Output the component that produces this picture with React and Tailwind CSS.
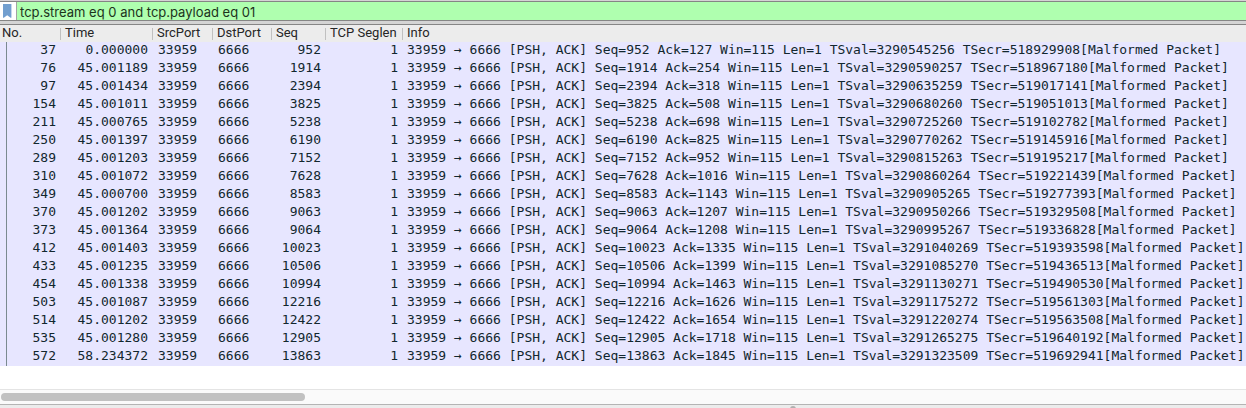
import { useState } from "react";

const packets = [
  [37, "0.000000", 952, 127, 3290545256, 518929908],
  [76, "45.001189", 1914, 254, 3290590257, 518967180],
  [97, "45.001434", 2394, 318, 3290635259, 519017141],
  [154, "45.001011", 3825, 508, 3290680260, 519051013],
  [211, "45.000765", 5238, 698, 3290725260, 519102782],
  [250, "45.001397", 6190, 825, 3290770262, 519145916],
  [289, "45.001203", 7152, 952, 3290815263, 519195217],
  [310, "45.001072", 7628, 1016, 3290860264, 519221439],
  [349, "45.000700", 8583, 1143, 3290905265, 519277393],
  [370, "45.001202", 9063, 1207, 3290950266, 519329508],
  [373, "45.001364", 9064, 1208, 3290995267, 519336828],
  [412, "45.001403", 10023, 1335, 3291040269, 519393598],
  [433, "45.001235", 10506, 1399, 3291085270, 519436513],
  [454, "45.001338", 10994, 1463, 3291130271, 519490530],
  [503, "45.001087", 12216, 1626, 3291175272, 519561303],
  [514, "45.001202", 12422, 1654, 3291220274, 519563508],
  [535, "45.001280", 12905, 1718, 3291265275, 519640192],
  [572, "58.234372", 13863, 1845, 3291323509, 519692941],
];

const columns = [
  { label: "No.", width: "w-[61px]", pad: "pl-0.5" },
  { label: "Time", width: "w-[92px]", pad: "pl-1" },
  { label: "SrcPort", width: "w-[60px]", pad: "pl-1" },
  { label: "DstPort", width: "w-[59px]", pad: "pl-1" },
  { label: "Seq", width: "w-[54px]", pad: "pl-1" },
  { label: "TCP Seglen", width: "w-[77px]", pad: "pl-1" },
  { label: "Info", width: "", pad: "pl-1" },
];

function FilterBar() {
  const [filter, setFilter] = useState("tcp.stream eq 0 and tcp.payload eq 01");
  return (
    <div className="bg-[#d4d4d4] pt-px pb-[3px]">
      <div className="flex h-5 border-y border-[#858585]">
        <button
          type="button"
          aria-label="Filter bookmarks"
          className="flex w-[17px] shrink-0 items-center border-r border-[#a3a3a3] bg-white pl-[3px]"
        >
          <svg width="9" height="14" viewBox="0 0 9 14" aria-hidden="true">
            <path d="M0 0H8.4V13.8H7.6L4.2 11.2L0.8 13.8H0Z" fill="#729fcf" />
          </svg>
        </button>
        <input
          type="text"
          aria-label="Display filter"
          spellCheck={false}
          value={filter}
          onChange={(e) => setFilter(e.target.value)}
          className="min-w-0 flex-1 bg-[#afffaf] pt-0.5 pl-[3px] font-[Inter,sans-serif] text-[13px] leading-4 text-[#1c331c] outline-none"
        />
      </div>
    </div>
  );
}

function PacketTable() {
  return (
    <table className="w-full table-fixed border-collapse whitespace-nowrap">
      <thead className="bg-[#ececec] text-[13px] leading-4 text-[#262626]">
        <tr>
          {columns.map((c, i) => (
            <th key={c.label} scope="col" className={`p-0 text-left font-normal ${c.width}`}>
              <div className="flex h-[17px] items-center">
                <span className={`flex-1 pb-px ${c.pad}`}>{c.label}</span>
                {i < columns.length - 1 && <span className="h-3 w-px bg-[#c0c0c0]" />}
              </div>
            </th>
          ))}
        </tr>
      </thead>
      <tbody className="bg-[#e7e6ff] font-['DejaVu_Sans_Mono',monospace] text-[13px] leading-4 text-[#12272e]">
        {packets.map(([no, time, seq, ack, tsval, tsecr]) => (
          <tr key={no}>
            <td className="p-0 text-right">
              <div className="ml-1.5 border-l border-[#7b8a90] pr-[5px] pb-0.5">{no}</div>
            </td>
            <td className="p-0 pr-[5px] pb-0.5 text-right">{time}</td>
            <td className="p-0 pb-0.5 pl-[5px]">33959</td>
            <td className="p-0 pb-0.5 pl-[5px]">6666</td>
            <td className="p-0 pr-[5px] pb-0.5 text-right">{seq}</td>
            <td className="p-0 pr-[5px] pb-0.5 text-right">1</td>
            <td className="overflow-hidden p-0 pb-0.5 pl-1">
              {`33959 → 6666 [PSH, ACK] Seq=${seq} Ack=${ack} Win=115 Len=1 TSval=${tsval} TSecr=${tsecr}[Malformed Packet]`}
            </td>
          </tr>
        ))}
      </tbody>
    </table>
  );
}

export default function App() {
  return (
    <main className="bg-white font-[Roboto,sans-serif]">
      <FilterBar />
      <section className="border-y border-t-[#858585] border-b-[#b4b4b4]">
        <PacketTable />
        <div className="mt-[23px] h-[15px] border-t border-[#e4e4e4] bg-[#fafafa] px-px pt-[3px]">
          <div className="h-2 w-[24.4%] rounded-full bg-[#c1c1c1]" />
        </div>
      </section>
      <footer className="h-[3px] overflow-hidden bg-[#ececec] pt-px">
        <div className="ml-[63.4%] size-1.5 rounded-full bg-[#b0b0b0]" />
      </footer>
    </main>
  );
}
